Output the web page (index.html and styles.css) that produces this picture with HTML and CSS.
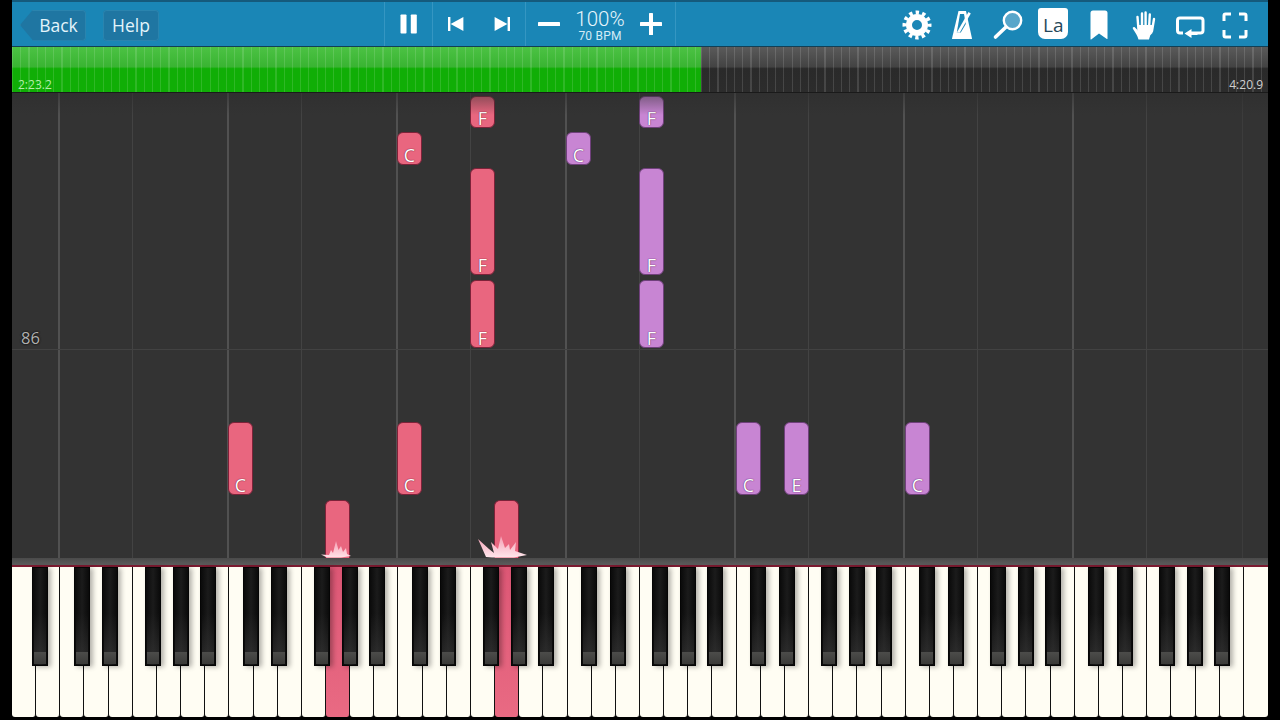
FILE: index.html
```html
<!DOCTYPE html>
<html lang="en">
<head>
<meta charset="utf-8">
<title>Synthesia</title>
<link rel="stylesheet" href="styles.css">
</head>
<body>
<div class="app">
  <header class="topbar">
    <nav class="nav-group">
      <button class="nav-btn back">Back</button>
      <button class="nav-btn help">Help</button>
    </nav>
    <div class="transport">
      <div class="cell cell-pause">
        <svg class="ic" width="20" height="22" viewBox="0 0 20 22"><rect x="1.500" y="1.500" width="6" height="19" rx=".8" fill="#fff"/><rect x="11.800" y="1.500" width="6" height="19" rx=".8" fill="#fff"/></svg>
      </div>
      <div class="cell cell-skip">
        <svg class="ic" width="18" height="18" viewBox="0 0 18 18"><rect x="1" y="2" width="2.400" height="14" fill="#fff"/><path d="M3.600 9 16.400 2v14z" fill="#fff"/></svg>
        <svg class="ic" width="18" height="18" viewBox="0 0 18 18"><rect x="14.600" y="2" width="2.400" height="14" fill="#fff"/><path d="M14.400 9 1.600 2v14z" fill="#fff"/></svg>
      </div>
      <div class="cell cell-tempo">
        <svg class="ic" width="24" height="24" viewBox="0 0 24 24"><rect x="1" y="10" width="22" height="4" rx=".6" fill="#fff"/></svg>
        <div class="tempo">
          <span class="tempo-pct">100%</span>
          <span class="tempo-bpm">70 BPM</span>
        </div>
        <svg class="ic" width="24" height="24" viewBox="0 0 24 24"><rect x="1" y="10" width="22" height="4" rx=".6" fill="#fff"/><rect x="10" y="1" width="4" height="22" rx=".6" fill="#fff"/></svg>
      </div>
    </div>
    <div class="tools">
      <div class="tool"><svg width="32" height="32" viewBox="0 0 32 32"><circle cx="16" cy="16" r="8" fill="none" stroke="#fff" stroke-width="6"/><circle cx="16" cy="16" r="12.500" fill="none" stroke="#fff" stroke-width="4" stroke-dasharray="3.400 3.140" stroke-dashoffset="1.700"/></svg></div>
      <div class="tool"><svg width="24" height="32" viewBox="0 0 24 32"><path d="M8.500 2h7.500l6 27.500q0 .5-.6.5H2.600q-.6 0-.6-.5z" fill="#fff"/><path d="M10 5h4l1.800 10-5 8.500H6.800z" fill="#1a86b6"/><path d="M18.500 3 20.800 4.500 9.800 23.500h-3z" fill="#fff"/></svg></div>
      <div class="tool"><svg width="32" height="32" viewBox="0 0 32 32"><circle cx="20.500" cy="11.500" r="8.700" fill="#58a6ca" stroke="#fff" stroke-width="2.400"/><path d="M14 18 3.500 28" stroke="#fff" stroke-width="3.600" stroke-linecap="round"/></svg></div>
      <div class="tool"><span class="la">La</span></div>
      <div class="tool"><svg width="20" height="32" viewBox="0 0 20 32"><path d="M1.500 4q0-2.500 2.500-2.500h12q2.500 0 2.500 2.500v25.500q0 1-1 .3L10 24.500 2.500 30.300q-1 .7-1-.3z" fill="#fff"/></svg></div>
      <div class="tool"><svg width="26" height="32" viewBox="0 0 26 32"><path d="M7.500 30.500c-1-4-3-6.500-5.500-10.500-.9-1.500.8-2.700 2-1.500l3 3V20h12.500v3.500c0 3-1 5-1.500 7z" fill="#fff"/><path d="M7.500 21 6.500 8M11 19V4.500M14.600 19V3.500M18 20 18.800 5.500M21 22 23 10" stroke="#fff" stroke-width="2.400" stroke-linecap="round"/><path d="M7 16h14.500v8l-3 3H8z" fill="#fff"/></svg></div>
      <div class="tool"><svg width="30" height="26" viewBox="0 0 30 26"><path d="M8 21H5q-2.500 0-2.500-2.500v-10Q2.500 6 5 6h20.500q2.500 0 2.500 2.500v10q0 2.500-2.500 2.500H15" fill="none" stroke="#fff" stroke-width="3"/><path d="M9.500 21.500 16.500 17v3h6v3h-6v3z" fill="#fff"/></svg></div>
      <div class="tool"><svg width="28" height="28" viewBox="0 0 28 28"><path d="M10 3H4.500Q3 3 3 4.500V10M18 3h5.500Q25 3 25 4.500V10M10 26H4.500Q3 26 3 24.500V19M18 26h5.500q1.500 0 1.500-1.500V19" fill="none" stroke="#fff" stroke-width="3"/></svg></div>
    </div>
  </header>

  <section class="timeline">
    <div class="played"></div>
    <div class="remaining"></div>
    <span class="time time-now">2:23.2</span>
    <span class="time time-total">4:20.9</span>
  </section>

  <main class="roll">
    <div class="measure"><span class="measure-num">86</span></div>

    <div class="note red" style="left:458px;top:3px;height:32px"><span>F</span></div>
    <div class="note red" style="left:385px;top:39px;height:33px"><span>C</span></div>
    <div class="note purple" style="left:554px;top:39px;height:33px"><span>C</span></div>
    <div class="note purple" style="left:627px;top:3px;height:32px"><span>F</span></div>
    <div class="note red" style="left:458px;top:75px;height:107px"><span>F</span></div>
    <div class="note purple" style="left:627px;top:75px;height:107px"><span>F</span></div>
    <div class="note red" style="left:458px;top:187px;height:68px"><span>F</span></div>
    <div class="note purple" style="left:627px;top:187px;height:68px"><span>F</span></div>
    <div class="note red" style="left:216px;top:329px;height:73px"><span>C</span></div>
    <div class="note red" style="left:385px;top:329px;height:73px"><span>C</span></div>
    <div class="note purple" style="left:724px;top:329px;height:73px"><span>C</span></div>
    <div class="note purple" style="left:772px;top:329px;height:73px"><span>E</span></div>
    <div class="note purple" style="left:893px;top:329px;height:73px"><span>C</span></div>
    <div class="note red playing" style="left:313px;top:407px;height:58px"></div>
    <div class="note red playing" style="left:482px;top:407px;height:58px"></div>

    <svg class="flare flare-a" width="32" height="20" viewBox="0 0 32 20"><defs><linearGradient id="fa" x1="0" y1="0" x2="0" y2="1"><stop offset="0" stop-color="#f6a0b4"/><stop offset="1" stop-color="#ffe2e8"/></linearGradient></defs><path d="M0 16.500 8 17 10 12 12 15 15 3 17.500 12 20 8 22 14 25 10 26 16 30 18 20 19.500 6 19.500z" fill="url(#fa)"/></svg>
    <svg class="flare flare-b" width="50" height="24" viewBox="0 0 50 24"><defs><linearGradient id="fb" x1="0" y1="0" x2="0" y2="1"><stop offset="0" stop-color="#f4a0b4"/><stop offset="1" stop-color="#ffe6ec"/></linearGradient></defs><path d="M0 5 11 15 16 19 13 8 20 15 23 2 27 14 31 10 32 16 38 8 37 17 49 21 36 23.500H14L8 23z" fill="url(#fb)"/></svg>
  </main>

  <div class="hit-bar"></div>

  <section class="keyboard">
    <div class="octave lead">
      <div class="white"></div><div class="white"></div>
      <div class="black k-lead"></div>
    </div>
    <div class="octave">
      <div class="white"></div><div class="white"></div><div class="white"></div><div class="white"></div><div class="white"></div><div class="white"></div><div class="white"></div>
      <div class="black k1"></div><div class="black k2"></div><div class="black k3"></div><div class="black k4"></div><div class="black k5"></div>
    </div>
    <div class="octave">
      <div class="white"></div><div class="white"></div><div class="white"></div><div class="white"></div><div class="white pressed"></div><div class="white"></div><div class="white"></div>
      <div class="black k1"></div><div class="black k2"></div><div class="black k3"></div><div class="black k4"></div><div class="black k5"></div>
    </div>
    <div class="octave">
      <div class="white"></div><div class="white"></div><div class="white"></div><div class="white"></div><div class="white pressed"></div><div class="white"></div><div class="white"></div>
      <div class="black k1"></div><div class="black k2"></div><div class="black k3"></div><div class="black k4"></div><div class="black k5"></div>
    </div>
    <div class="octave">
      <div class="white"></div><div class="white"></div><div class="white"></div><div class="white"></div><div class="white"></div><div class="white"></div><div class="white"></div>
      <div class="black k1"></div><div class="black k2"></div><div class="black k3"></div><div class="black k4"></div><div class="black k5"></div>
    </div>
    <div class="octave">
      <div class="white"></div><div class="white"></div><div class="white"></div><div class="white"></div><div class="white"></div><div class="white"></div><div class="white"></div>
      <div class="black k1"></div><div class="black k2"></div><div class="black k3"></div><div class="black k4"></div><div class="black k5"></div>
    </div>
    <div class="octave">
      <div class="white"></div><div class="white"></div><div class="white"></div><div class="white"></div><div class="white"></div><div class="white"></div><div class="white"></div>
      <div class="black k1"></div><div class="black k2"></div><div class="black k3"></div><div class="black k4"></div><div class="black k5"></div>
    </div>
    <div class="octave">
      <div class="white"></div><div class="white"></div><div class="white"></div><div class="white"></div><div class="white"></div><div class="white"></div><div class="white"></div>
      <div class="black k1"></div><div class="black k2"></div><div class="black k3"></div><div class="black k4"></div><div class="black k5"></div>
    </div>
    <div class="octave last">
      <div class="white"></div>
    </div>
  </section>
</div>
</body>
</html>
```
FILE: styles.css
```css
* { box-sizing: border-box; }
html, body { margin: 0; height: 100%; background: #000; overflow: hidden; }
body { font-family: "Open Sans", "Noto Sans", sans-serif; color: #fff; }

.app {
  width: 1256px;
  height: 717px;
  margin: 0 12px;
  display: flex;
  flex-direction: column;
}

/* top bar */
.topbar {
  height: 47px;
  flex: none;
  display: flex;
  background: #1a86b6;
  border-top: 2px solid #155a7c;
  border-bottom: 1px solid #123f55;
}
.nav-group {
  width: 372px;
  flex: none;
  display: flex;
  align-items: center;
  gap: 17px;
  padding: 2px 0 0 8px;
}
.nav-btn {
  height: 31px;
  border: 0;
  padding: 0 0 1px;
  background: #1f76a2;
  color: #e4f4fb;
  font: 17.500px/30px "Open Sans", sans-serif;
  box-shadow: inset 0 0 0 1px #2a84ae;
}
.back {
  width: 66px;
  padding-left: 11px;
  text-align: center;
  clip-path: polygon(13px 0, 100% 0, 100% 100%, 13px 100%, 0 50%);
  border-radius: 0 4px 4px 0;
}
.help { width: 56px; border-radius: 4px; }

.transport { display: flex; flex: none; border-left: 1px solid #3596c2; }
.cell {
  display: flex;
  align-items: center;
  border-right: 1px solid #3596c2;
}
.ic { display: block; flex: none; }
.cell-pause { width: 48px; justify-content: center; }
.cell-skip { width: 93px; justify-content: space-between; padding: 0 14px; }
.cell-tempo { width: 150px; justify-content: space-between; padding: 0 12px 0 11px; }
.tempo { display: flex; flex-direction: column; align-items: center; padding-top: 5px; }
.tempo-pct { display: block; font: 300 20.500px/20px Roboto, sans-serif; color: #e8f6fc; }
.tempo-bpm { display: block; font: 400 12px/15px Roboto, sans-serif; letter-spacing: .2px; color: #d5ecf6; }

.tools {
  margin-left: auto;
  padding-right: 10px;
  display: flex;
  align-items: center;
}
.tool {
  width: 45.500px;
  height: 44px;
  padding-top: 1px;
  display: flex;
  align-items: center;
  justify-content: center;
}
.la {
  width: 30px;
  height: 31px;
  margin-bottom: 2px;
  display: block;
  background: #fff;
  border-radius: 3px 3px 7px 7px;
  color: #26475a;
  font-size: 19px;
  line-height: 34px;
  text-align: center;
}

/* timeline */
.timeline {
  height: 46px;
  flex: none;
  position: relative;
  display: flex;
  border-bottom: 1px solid #1a1a1a;
}
.played {
  width: 689px;
  background:
    repeating-linear-gradient(90deg, rgba(255,255,255,.13) 0 1.200px, transparent 1.200px 8.230px),
    linear-gradient(#4cc244 0, #39b432 44%, #10ae06 48%, #10ae06 100%);
}
.remaining {
  flex: 1;
  background:
    repeating-linear-gradient(90deg, rgba(255,255,255,.13) 0 1.200px, transparent 1.200px 8.230px),
    linear-gradient(#5a5a5a 0, #434343 44%, #2a2a2a 48%, #2c2c2c 100%);
}
.time {
  position: absolute;
  bottom: 0;
  font-size: 12px;
  line-height: 14px;
}
.time-now { left: 6px; color: #b4ecaa; }
.time-total { right: 5px; color: #cfcfcf; }

/* note roll */
.roll {
  flex: 1;
  position: relative;
  overflow: hidden;
  background:
    linear-gradient(#3c3c3c, #3c3c3c) 1230px 0 / 1px 100% no-repeat,
    repeating-linear-gradient(90deg,
      transparent 0 46px, #515151 46px 48px,
      transparent 48px 120px, #434343 120px 121px,
      transparent 121px 169px) 0 0 / 1190px 100% no-repeat,
    #333;
}
.roll::after {
  content: "";
  position: absolute;
  left: 0;
  right: 0;
  top: 0;
  height: 22px;
  background: linear-gradient(rgba(45,45,45,.55), rgba(45,45,45,0));
}
.measure {
  position: absolute;
  left: 0;
  right: 0;
  top: 256px;
  height: 1px;
  background: #424242;
}
.measure-num {
  position: absolute;
  left: 9px;
  top: -21px;
  font-size: 16.500px;
  line-height: 20px;
  color: #b0b0b0;
  text-shadow: 0 0 2px #111, 0 0 2px #111;
}
.note {
  position: absolute;
  width: 25px;
  border-radius: 6px;
  display: flex;
  align-items: flex-end;
  justify-content: center;
  font-size: 18px;
  line-height: 18px;
}
.note span { color: #fff; }
.red { background: #e9667f; border: 1px solid #7d2239; }
.red span { text-shadow: 0 0 1px #7d2239, 0 0 1px #7d2239; }
.purple { background: #c885d3; border: 1px solid #70407c; }
.purple span { text-shadow: 0 0 1px #5f3069, 0 0 1px #5f3069; }
.playing { border-bottom: 0; border-radius: 6px 6px 0 0; }
.flare { position: absolute; filter: blur(.6px); }
.flare-a { left: 309px; top: 445px; }
.flare-b { left: 466px; top: 441px; }

.hit-bar {
  height: 9px;
  flex: none;
  background: linear-gradient(#4a4a4a 0, #5a5a5a 70%, #5a5a5a 78%, #7c1a30 78%, #7c1a30 100%);
}

/* keyboard */
.keyboard {
  height: 150px;
  flex: none;
  display: flex;
}
.octave {
  flex: 7;
  position: relative;
  display: flex;
}
.lead { flex: 2; }
.last { flex: 1; }
.white {
  flex: 1;
  background: #fffdf3;
  border-right: 1.500px solid #111;
  border-radius: 0 0 3px 3px;
}
.last .white { border-right: 0; }
.pressed { background: linear-gradient(#dd5775, #e96a83); }
.black {
  position: absolute;
  top: 0;
  width: 16px;
  height: 99px;
  z-index: 1;
  border: 1px solid #050505;
  background: linear-gradient(90deg, #0a0a0a, #1b1b1b 50%, #0a0a0a), #111;
  box-shadow: 3px 1px 5px rgba(0,0,0,.3);
}
.black::before {
  content: "";
  position: absolute;
  left: 1px;
  right: 1px;
  bottom: 12px;
  height: 40px;
  background: linear-gradient(rgba(60,60,60,0), rgba(60,60,60,.5));
}
.black::after {
  content: "";
  position: absolute;
  left: 1px;
  right: 1px;
  bottom: 1px;
  height: 12px;
  background: linear-gradient(#4c4c4a, #3a3a38);
}
.k-lead { left: 20px; }
.k1 { left: 13.500px; }
.k2 { left: 42px; }
.k3 { left: 84.500px; }
.k4 { left: 112.300px; }
.k5 { left: 139.600px; }
```
